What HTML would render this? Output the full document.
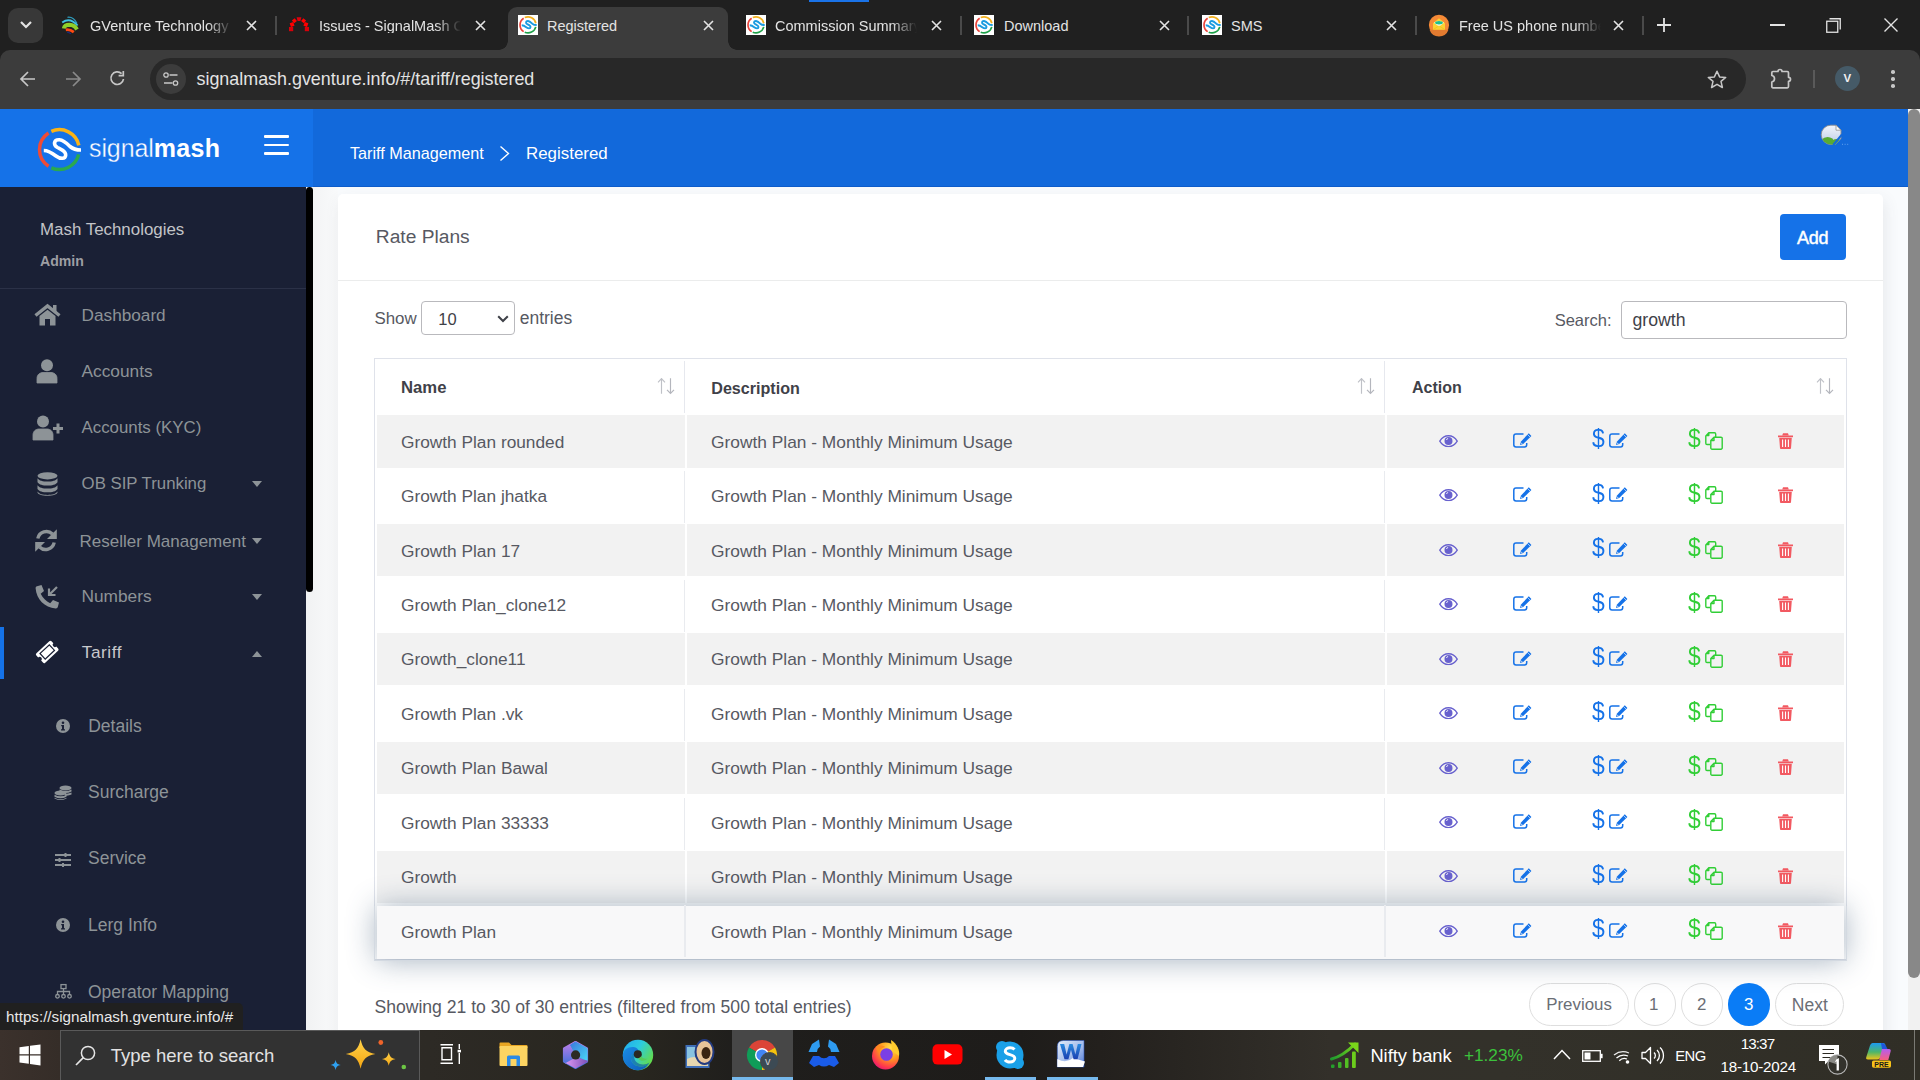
<!DOCTYPE html>
<html><head><meta charset="utf-8">
<style>
*{box-sizing:border-box;margin:0;padding:0}
html,body{width:1920px;height:1080px;overflow:hidden;background:#202020;font-family:"Liberation Sans",sans-serif}
.a{position:absolute}
.t{position:absolute;white-space:nowrap;line-height:1}
svg{position:absolute;overflow:visible}
</style></head><body>
<!-- ===== CHROME TAB STRIP ===== -->
<div class="a" style="left:0;top:0;width:1920px;height:50px;background:#202020"></div>
<div class="a" style="left:809px;top:0;width:60px;height:2px;background:#1a73e8"></div>
<div class="a" style="left:8px;top:8px;width:35px;height:35px;border-radius:10px;background:#383838"></div>
<svg style="left:19px;top:20px" width="14" height="10" viewBox="0 0 14 10"><path d="M2 2 L7 7 L12 2" stroke="#e3e3e3" stroke-width="2.2" fill="none"/></svg>
<!-- active tab -->
<div class="a" style="left:508px;top:7px;width:220px;height:43px;background:#3c3c3c;border-radius:9px 9px 0 0"></div>
<div class="a" style="left:499px;top:41px;width:9px;height:9px;background:radial-gradient(circle at 0 0,#202020 8.5px,#3c3c3c 9px)"></div>
<div class="a" style="left:728px;top:41px;width:9px;height:9px;background:radial-gradient(circle at 100% 0,#202020 8.5px,#3c3c3c 9px)"></div>
<!-- tab separators -->
<div class="a" style="left:275px;top:16px;width:2px;height:19px;background:#4a4a4a"></div>
<div class="a" style="left:960px;top:16px;width:2px;height:19px;background:#4a4a4a"></div>
<div class="a" style="left:1187px;top:16px;width:2px;height:19px;background:#4a4a4a"></div>
<div class="a" style="left:1415px;top:16px;width:2px;height:19px;background:#4a4a4a"></div>
<div class="a" style="left:1642px;top:16px;width:2px;height:19px;background:#4a4a4a"></div>
<!-- tab 1 GVenture -->
<svg style="left:61px;top:15px" width="18" height="19" viewBox="0 0 18 19">
<path d="M6.5 2.3Q12.5 1.5 16 8.5" stroke="#2f9dbd" stroke-width="1.3" fill="none"/>
<path d="M1.2 7.5Q9 1.8 16.6 10.5" stroke="#3fc0e2" stroke-width="1.9" fill="none"/>
<path d="M2.8 13.5Q3.5 9.8 8.5 9.8Q13.5 10 16 14.5" stroke="#8fcf2a" stroke-width="4" fill="none"/>
<path d="M4.8 14.8Q9 14.2 12.8 17.2" stroke="#ff4a12" stroke-width="2.8" fill="none"/>
<path d="M6 17.2Q8 17.5 10 18.8" stroke="#1c2a7a" stroke-width="1.2" fill="none"/>
</svg>
<div class="t" style="left:90px;top:18.8px;font-size:14.5px;color:#e3e3e3;width:143px;overflow:hidden;-webkit-mask-image:linear-gradient(90deg,#000 82%,transparent)">GVenture Technology</div>
<svg style="left:246px;top:20px" width="11" height="11" viewBox="0 0 11 11"><path d="M1 1L10 10M10 1L1 10" stroke="#e3e3e3" stroke-width="1.6"/></svg>
<!-- tab 2 Issues -->
<svg style="left:289px;top:17px" width="20" height="15" viewBox="0 0 20 15">
<rect x="0" y="10" width="4.2" height="4.2" fill="#d8000a"/>
<rect x="1.2" y="5.6" width="3.8" height="3.8" fill="#f00" transform="rotate(-20 3.1 7.5)"/>
<rect x="3.6" y="1.9" width="3.6" height="3.6" fill="#f00" transform="rotate(-40 5.4 3.7)"/>
<path d="M7.6 0.3H12.4L11.4 4H8.6Z" fill="#dd000c"/>
<rect x="12.8" y="1.9" width="3.6" height="3.6" fill="#f00" transform="rotate(40 14.6 3.7)"/>
<rect x="15" y="5.6" width="3.8" height="3.8" fill="#f00" transform="rotate(20 16.9 7.5)"/>
<rect x="15.8" y="10" width="4.2" height="4.2" fill="#d8000a"/>
</svg>
<div class="t" style="left:319px;top:18.8px;font-size:14.5px;color:#e3e3e3;width:142px;overflow:hidden;-webkit-mask-image:linear-gradient(90deg,#000 82%,transparent)">Issues - SignalMash Confluence</div>
<svg style="left:475px;top:20px" width="11" height="11" viewBox="0 0 11 11"><path d="M1 1L10 10M10 1L1 10" stroke="#e3e3e3" stroke-width="1.6"/></svg>
<!-- tab 3 Registered (active) -->
<svg style="left:518px;top:15px" width="20" height="20"><use href="#smfav"/></svg>
<div class="t" style="left:547px;top:18.8px;font-size:14.5px;color:#e3e3e3">Registered</div>
<svg style="left:703px;top:20px" width="11" height="11" viewBox="0 0 11 11"><path d="M1 1L10 10M10 1L1 10" stroke="#e3e3e3" stroke-width="1.6"/></svg>
<svg width="0" height="0" style="position:absolute">
<defs>
<symbol id="smfav" viewBox="0 0 20 20">
<rect width="20" height="20" fill="#fff"/>
<path d="M5.64 3.19 A8.0 8.0 0 0 0 5.64 16.61" stroke="#e8453c" stroke-width="1.7" fill="none"/>
<path d="M6.75 2.59 A8.0 8.0 0 0 1 17.83 8.24" stroke="#f2b01e" stroke-width="1.7" fill="none"/>
<path d="M17.76 11.84 A8.0 8.0 0 0 1 6.75 17.21" stroke="#1fa24a" stroke-width="1.7" fill="none"/>
<path d="M 3.73 10.26 C 5.42 10.26 7.03 11.27 8.63 12.47 C 10.24 13.68 12.45 13.88 12.53 12.07 C 12.65 10.46 10.44 9.66 9.24 9.06 C 7.43 8.05 7.63 5.84 10.04 5.96 C 11.45 6.04 12.85 7.25 14.26 8.65 C 15.47 9.66 16.67 10.06 18.68 10.06" stroke="#1a9be0" stroke-width="1.9" fill="none"/>
</symbol>
<symbol id="tabx" viewBox="0 0 11 11"><path d="M1 1L10 10M10 1L1 10" stroke="#e3e3e3" stroke-width="1.6"/></symbol>
</defs></svg>
<!-- tab 4 -->
<svg style="left:746px;top:15px" width="20" height="20"><use href="#smfav"/></svg>
<div class="t" style="left:775px;top:18.8px;font-size:14.5px;color:#e3e3e3;width:142px;overflow:hidden;-webkit-mask-image:linear-gradient(90deg,#000 82%,transparent)">Commission Summary</div>
<svg style="left:931px;top:20px" width="11" height="11"><use href="#tabx"/></svg>
<!-- tab 5 -->
<svg style="left:974px;top:15px" width="20" height="20"><use href="#smfav"/></svg>
<div class="t" style="left:1004px;top:18.8px;font-size:14.5px;color:#e3e3e3">Download</div>
<svg style="left:1159px;top:20px" width="11" height="11"><use href="#tabx"/></svg>
<!-- tab 6 -->
<svg style="left:1202px;top:15px" width="20" height="20"><use href="#smfav"/></svg>
<div class="t" style="left:1231px;top:18.8px;font-size:14.5px;color:#e3e3e3">SMS</div>
<svg style="left:1386px;top:20px" width="11" height="11"><use href="#tabx"/></svg>
<!-- tab 7 -->
<svg style="left:1428px;top:14px" width="22" height="22" viewBox="0 0 22 22">
<circle cx="11" cy="10.9" r="10.1" fill="#f68a36"/>
<path d="M1.5 15.8H20.5A10.1 10.1 0 0 1 1.5 15.8Z" fill="#e27b30"/>
<path d="M5 9.3L11 4.2L17 9.3V15.7H5Z" fill="#fbd232"/>
<path d="M6 8.8Q11 5 16 8.8L11 12.5Z" fill="#fff"/>
<ellipse cx="11" cy="8.8" rx="3.9" ry="1.7" fill="#20bf8c"/>
<path d="M5 15.7L11 11.8L17 15.7" stroke="#efc21a" stroke-width="0.8" fill="none"/>
</svg>
<div class="t" style="left:1459px;top:18.8px;font-size:14.5px;color:#e3e3e3;width:142px;overflow:hidden;-webkit-mask-image:linear-gradient(90deg,#000 82%,transparent)">Free US phone number</div>
<svg style="left:1613px;top:20px" width="11" height="11"><use href="#tabx"/></svg>
<!-- new tab + -->
<svg style="left:1657px;top:18px" width="14" height="14" viewBox="0 0 14 14"><path d="M7 0V14M0 7H14" stroke="#e3e3e3" stroke-width="1.8"/></svg>
<!-- window controls -->
<div class="a" style="left:1770px;top:24px;width:15px;height:1.5px;background:#e3e3e3"></div>
<svg style="left:1826px;top:18px" width="15" height="15" viewBox="0 0 15 15"><rect x="0.75" y="3.25" width="11" height="11" fill="none" stroke="#e3e3e3" stroke-width="1.3"/><path d="M3.5 0.75H14.25V11.5" fill="none" stroke="#e3e3e3" stroke-width="1.3"/></svg>
<svg style="left:1884px;top:18px" width="14" height="14" viewBox="0 0 14 14"><path d="M0.5 0.5L13.5 13.5M13.5 0.5L0.5 13.5" stroke="#e3e3e3" stroke-width="1.4"/></svg>
<!-- ===== TOOLBAR ===== -->
<div class="a" style="left:0;top:50px;width:1920px;height:59px;background:#3c3c3c;border-radius:10px 10px 0 0"></div>
<div class="a" style="left:508px;top:45px;width:220px;height:10px;background:#3c3c3c"></div>
<svg style="left:20px;top:71px" width="16" height="16" viewBox="0 0 16 16"><path d="M15 8H1.5M8 1L1 8L8 15" stroke="#c7c7c7" stroke-width="1.7" fill="none"/></svg>
<svg style="left:65px;top:71px" width="16" height="16" viewBox="0 0 16 16"><path d="M1 8H14.5M8 1L15 8L8 15" stroke="#8a8a8a" stroke-width="1.7" fill="none"/></svg>
<svg style="left:109px;top:70px" width="17" height="17" viewBox="0 0 17 17"><path d="M14.5 9A6.3 6.3 0 1 1 12.6 3.6" stroke="#c7c7c7" stroke-width="1.7" fill="none"/><path d="M14.3 1V5.7H9.6" stroke="#c7c7c7" stroke-width="1.7" fill="none"/></svg>
<div class="a" style="left:150px;top:58px;width:1596px;height:42px;border-radius:21px;background:#282828"></div>
<div class="a" style="left:156px;top:64px;width:30px;height:30px;border-radius:15px;background:#3c3c3c"></div>
<svg style="left:163px;top:72px" width="16" height="15" viewBox="0 0 16 15"><circle cx="3" cy="3" r="2.2" stroke="#c7c7c7" stroke-width="1.3" fill="none"/><path d="M6.5 3H14.5M1 11H9.5" stroke="#c7c7c7" stroke-width="1.4"/><circle cx="12.5" cy="11" r="2.2" stroke="#c7c7c7" stroke-width="1.3" fill="none"/></svg>
<div class="t" style="left:196.5px;top:70.8px;font-size:17.9px;color:#e3e3e3">signalmash.gventure.info/#/tariff/registered</div>
<svg style="left:1707px;top:70px" width="20" height="19" viewBox="0 0 20 19"><path d="M10 1.2L12.6 6.9L18.7 7.4L14 11.4L15.4 17.5L10 14.3L4.6 17.5L6 11.4L1.3 7.4L7.4 6.9Z" stroke="#c7c7c7" stroke-width="1.5" fill="none" stroke-linejoin="round"/></svg>
<svg style="left:1771px;top:68px" width="21" height="21" viewBox="0 0 21 21"><path d="M2 3.5H7A2 2 0 0 1 11 3.5H16.3Q17.5 3.5 17.5 4.7V9.3A2 2 0 0 1 17.5 13.3V18.6Q17.5 19.8 16.3 19.8H2Q0.8 19.8 0.8 18.6V14Q3.5 13.5 3.5 10.8Q3.5 8 0.8 7.5V4.7Q0.8 3.5 2 3.5Z" stroke="#c7c7c7" stroke-width="1.7" fill="none" stroke-linejoin="round"/></svg>
<div class="a" style="left:1813px;top:70px;width:1.5px;height:18px;background:#5a5a5a"></div>
<div class="a" style="left:1835px;top:66px;width:25px;height:25px;border-radius:50%;background:#455a67"></div>
<div class="t" style="left:1843.6px;top:73.2px;font-size:11.5px;font-weight:700;color:#f0f0f0">V</div>
<div class="a" style="left:1891px;top:70px;width:3.5px;height:3.5px;border-radius:50%;background:#c7c7c7;box-shadow:0 7px 0 #c7c7c7,0 14px 0 #c7c7c7"></div>
<!-- ===== PAGE ===== -->
<div class="a" style="left:0;top:109px;width:1908px;height:921px;background:#f9fbfd"></div>
<!-- header -->
<div class="a" style="left:0;top:109px;width:313px;height:78px;background:#1572e8"></div>
<div class="a" style="left:313px;top:109px;width:1595px;height:78px;background:#1269db"></div>
<div class="a" style="left:313px;top:186px;width:1595px;height:1px;background:#0d5cca"></div>
<svg style="left:0;top:0" width="100" height="200" viewBox="0 0 100 200">
<path d="M48.56 132.91 A19.9 19.9 0 0 0 48.56 166.29" stroke="#ef4b36" stroke-width="3.5" fill="none"/>
<path d="M51.31 131.42 A19.9 19.9 0 0 1 78.84 145.33" stroke="#fbb316" stroke-width="3.5" fill="none"/>
<path d="M78.71 154.41 A19.9 19.9 0 0 1 51.31 167.78" stroke="#2aa94e" stroke-width="3.5" fill="none"/>
<path d="M43.8 150.5 C48 150.5 52 153 56 156 C60 159 65.5 159.5 65.7 155 C66 151 60.5 149 57.5 147.5 C53 145 53.5 139.5 59.5 139.8 C63 140 66.5 143 70 146.5 C73 149 76 150 81 150" stroke="#fff" stroke-width="3.6" fill="none"/>
</svg>
<div class="t" style="left:89px;top:135.8px;font-size:25px;color:#fff;letter-spacing:-0.1px"><span style="-webkit-text-stroke:0.35px #1572e8">signal</span><b style="font-weight:700;letter-spacing:0.3px">mash</b></div>
<div class="a" style="left:264px;top:135px;width:25px;height:3px;background:#fff;border-radius:1px"></div>
<div class="a" style="left:264px;top:143.5px;width:25px;height:2.5px;background:#fff;border-radius:1px"></div>
<div class="a" style="left:264px;top:152px;width:25px;height:3px;background:#fff;border-radius:1px"></div>
<div class="t" style="left:350px;top:145px;font-size:16.2px;color:#fff">Tariff Management</div>
<svg style="left:499px;top:145px" width="12" height="17" viewBox="0 0 12 17"><path d="M1.5 1.5L9.5 8.5L1.5 15.5" stroke="#fff" stroke-width="1.4" fill="none"/></svg>
<div class="t" style="left:526px;top:145.6px;font-size:16.9px;color:#fff">Registered</div>
<svg style="left:1820px;top:124px" width="30" height="22" viewBox="0 0 30 22">
<defs><linearGradient id="bi" x1="0" y1="0" x2="0" y2="1"><stop offset="0" stop-color="#f2f5fb"/><stop offset="1" stop-color="#bccbe6"/></linearGradient>
<clipPath id="bic"><path d="M10.8 1.2H16L21 6.2V14.6L15.2 20.4H10.8A9.6 9.6 0 0 1 10.8 1.2Z"/></clipPath></defs>
<path d="M10.8 1.2H16L21 6.2V14.6L15.2 20.4H10.8A9.6 9.6 0 0 1 10.8 1.2Z" fill="url(#bi)" stroke="#8f8f8f" stroke-width="0.9"/>
<g clip-path="url(#bic)"><path d="M0 17Q6 10.5 12.5 14.5L16 21H0Z" fill="#58ab32"/><path d="M13 16Q16 14 21 16V21H13Z" fill="#58ab32"/></g>
<path d="M16 1.2V6.2H21Z" fill="#fff" stroke="#8f8f8f" stroke-width="0.8"/>
<path d="M22 10.5L13.2 21" stroke="#1269db" stroke-width="2"/>
<path d="M22 20.3H29" stroke="#6aa6f0" stroke-width="0.9" stroke-dasharray="1 1.6"/>
</svg>
<!-- sidebar -->
<div class="a" style="left:0;top:187px;width:306px;height:843px;background:#1a2035"></div>
<div class="a" style="left:306px;top:187px;width:32px;height:843px;background:linear-gradient(90deg,#f1f2f3,#f9fafb)"></div>
<div class="a" style="left:306px;top:187px;width:7px;height:405px;background:#000;border-radius:3.5px"></div>
<div class="t" style="left:40px;top:221.5px;font-size:16.9px;color:#c3c4c8">Mash Technologies</div>
<div class="t" style="left:40px;top:254.1px;font-size:14.1px;font-weight:700;color:#9d9ea3">Admin</div>
<div class="a" style="left:0;top:288px;width:306px;height:1px;background:#2b3147"></div>
<!-- nav items -->
<svg style="left:34px;top:304px" width="27" height="22" viewBox="0 0 27 22">
<path d="M1.5 11.5L13.5 2L25.5 11.5" stroke="#8d9397" stroke-width="3.4" fill="none" stroke-linejoin="miter"/>
<rect x="19" y="1" width="3.5" height="7" fill="#8d9397"/>
<path d="M5.5 12L13.5 5.8L21.5 12V21.5H16V15H11V21.5H5.5Z" fill="#8d9397"/>
</svg>
<div class="t" style="left:81.6px;top:307.4px;font-size:17.2px;color:#8d9397">Dashboard</div>
<svg style="left:36px;top:359px" width="22" height="25" viewBox="0 0 22 25">
<circle cx="11" cy="6.3" r="6" fill="#8d9397"/>
<path d="M1 24V19.5C1 15.5 4 13.5 7 13.5H15C18 13.5 21 15.5 21 19.5V24Z" fill="#8d9397" stroke="#8d9397" stroke-width="0.8" stroke-linejoin="round"/>
</svg>
<div class="t" style="left:81.5px;top:363.3px;font-size:17.3px;color:#8d9397">Accounts</div>
<svg style="left:32px;top:415px" width="31" height="26" viewBox="0 0 31 26">
<circle cx="11" cy="6.5" r="6" fill="#8d9397"/>
<path d="M1 25V20C1 16 4 14 7 14H15C18 14 21 16 21 20V25Z" fill="#8d9397" stroke="#8d9397" stroke-width="0.8" stroke-linejoin="round"/>
<path d="M26 8.5V18.5M21 13.5H31" stroke="#8d9397" stroke-width="3"/>
</svg>
<div class="t" style="left:81.5px;top:419.8px;font-size:16.85px;color:#8d9397">Accounts (KYC)</div>
<svg style="left:37px;top:472px" width="21" height="24" viewBox="0 0 21 24">
<ellipse cx="10.5" cy="3.8" rx="10" ry="3.6" fill="#8d9397"/>
<path d="M0.5 6.3C2 8.8 6 9.6 10.5 9.6S19 8.8 20.5 6.3V10.2C19 12.7 15 13.5 10.5 13.5S2 12.7 0.5 10.2Z" fill="#8d9397"/>
<path d="M0.5 13.2C2 15.7 6 16.5 10.5 16.5S19 15.7 20.5 13.2V17C19 19.5 15 20.3 10.5 20.3S2 19.5 0.5 17Z" fill="#8d9397"/>
<path d="M0.5 19.6C2 22.1 6 23 10.5 23S19 22.1 20.5 19.6V20.2C20.5 22.3 16 23.8 10.5 23.8S0.5 22.3 0.5 20.2Z" fill="#8d9397"/>
</svg>
<div class="t" style="left:81.6px;top:475.8px;font-size:16.8px;color:#8d9397">OB SIP Trunking</div>
<svg style="left:252px;top:481px" width="10" height="6" viewBox="0 0 10 6"><path d="M0 0H10L5 6Z" fill="#8d9397"/></svg>
<svg style="left:34px;top:528px" width="24" height="25" viewBox="0 0 24 25">
<path d="M3.8 10.5A8.8 8.8 0 0 1 18.5 6" stroke="#8d9397" stroke-width="3.4" fill="none"/>
<path d="M22.8 1.2V11H13Z" fill="#8d9397"/>
<path d="M20.2 14.5A8.8 8.8 0 0 1 5.5 19" stroke="#8d9397" stroke-width="3.4" fill="none"/>
<path d="M1.2 23.8V14H11Z" fill="#8d9397"/>
</svg>
<div class="t" style="left:79.6px;top:532.6px;font-size:17px;color:#8d9397">Reseller Management</div>
<svg style="left:252px;top:538px" width="10" height="6" viewBox="0 0 10 6"><path d="M0 0H10L5 6Z" fill="#8d9397"/></svg>
<svg style="left:35px;top:584px" width="26" height="25" viewBox="0 0 26 25">
<path d="M6.5 1L2 2.2C1 2.5 0.5 3.3 0.6 4.3C1.5 15.5 9.5 23.5 20.7 24.4C21.7 24.5 22.5 24 22.8 23L24 18.5L18 16L15.2 19.3C11 17.2 7.8 14 5.7 9.8L9 7Z" fill="#8d9397"/>
<path d="M14 11L22 3M14 4.5V11H20.5" stroke="#8d9397" stroke-width="2.2" fill="none"/>
</svg>
<div class="t" style="left:81.5px;top:588.4px;font-size:17.3px;color:#8d9397">Numbers</div>
<svg style="left:252px;top:594px" width="10" height="6" viewBox="0 0 10 6"><path d="M0 0H10L5 6Z" fill="#8d9397"/></svg>
<!-- active tariff -->
<div class="a" style="left:0;top:627px;width:4px;height:52px;background:#1572e8"></div>
<svg style="left:35px;top:640px" width="25" height="24" viewBox="0 0 25 24">
<g transform="rotate(-43 12.25 11.95) translate(12.25 11.95) scale(1.09) translate(-12.25 -11.95)">
<path d="M4.2 6.05H20.3Q21.75 6.05 21.75 7.5V9.95A2 2 0 0 0 21.75 13.95V16.4Q21.75 17.85 20.3 17.85H4.2Q2.75 17.85 2.75 16.4V13.95A2 2 0 0 0 2.75 9.95V7.5Q2.75 6.05 4.2 6.05Z" fill="#fff"/>
<rect x="6.4" y="8.45" width="11.7" height="7" fill="none" stroke="#1a2035" stroke-width="1.1"/>
</g>
</svg>
<div class="t" style="left:81.7px;top:644.4px;font-size:17.2px;color:#c8c9cd;letter-spacing:0.6px">Tariff</div>
<svg style="left:252px;top:651px" width="10" height="6" viewBox="0 0 10 6"><path d="M0 6H10L5 0Z" fill="#8d9397"/></svg>
<!-- sub items -->
<svg style="left:56px;top:719px" width="14" height="14" viewBox="0 0 14 14">
<circle cx="7" cy="7" r="7" fill="#8d9397"/>
<circle cx="7" cy="3.8" r="1.3" fill="#1a2035"/>
<path d="M5.2 6H8V10.2H9V11.5H5V10.2H6V7.3H5.2Z" fill="#1a2035"/>
</svg>
<div class="t" style="left:88.2px;top:718.2px;font-size:17.5px;color:#8d9397">Details</div>
<svg style="left:54px;top:785px" width="18" height="16" viewBox="0 0 18 16">
<ellipse cx="11.5" cy="3" rx="6" ry="2.6" fill="#8d9397"/>
<path d="M5.5 4.5Q11.5 7.5 17.5 4.5V6.5Q11.5 9.5 5.5 6.5Z" fill="#8d9397"/>
<path d="M11 8.5Q14.5 9 17.5 7.5V9.5Q14.5 11 11 10.5Z" fill="#8d9397"/>
<ellipse cx="6.5" cy="8" rx="6" ry="2.6" fill="#8d9397"/>
<path d="M0.5 9.8Q6.5 12.8 12.5 9.8V11.8Q6.5 14.8 0.5 11.8Z" fill="#8d9397"/>
<path d="M0.5 12.8Q6.5 15.8 12.5 12.8V13.5Q6.5 16.5 0.5 13.5Z" fill="#8d9397"/>
</svg>
<div class="t" style="left:88px;top:784.1px;font-size:17.5px;color:#8d9397">Surcharge</div>
<svg style="left:55px;top:853px" width="16" height="14" viewBox="0 0 16 14">
<path d="M0 2H16M0 7H16M0 12H16" stroke="#8d9397" stroke-width="1.8"/>
<rect x="9.5" y="0" width="2" height="4" fill="#8d9397"/>
<rect x="3.5" y="5" width="2" height="4" fill="#8d9397"/>
<rect x="7" y="10" width="2" height="4" fill="#8d9397"/>
</svg>
<div class="t" style="left:88px;top:850.2px;font-size:17.5px;color:#8d9397">Service</div>
<svg style="left:56px;top:918px" width="14" height="14" viewBox="0 0 14 14">
<circle cx="7" cy="7" r="7" fill="#8d9397"/>
<circle cx="7" cy="3.8" r="1.3" fill="#1a2035"/>
<path d="M5.2 6H8V10.2H9V11.5H5V10.2H6V7.3H5.2Z" fill="#1a2035"/>
</svg>
<div class="t" style="left:88px;top:917px;font-size:17.5px;color:#8d9397">Lerg Info</div>
<svg style="left:55px;top:984px" width="17" height="15" viewBox="0 0 17 15">
<rect x="6" y="0.6" width="5" height="4" fill="none" stroke="#8d9397" stroke-width="1.3"/>
<path d="M8.5 4.6V7.5M2.5 10V7.5H14.5V10M8.5 7.5V10" stroke="#8d9397" stroke-width="1.3" fill="none"/>
<circle cx="2.5" cy="12.3" r="1.8" fill="none" stroke="#8d9397" stroke-width="1.3"/>
<circle cx="8.5" cy="12.3" r="1.8" fill="none" stroke="#8d9397" stroke-width="1.3"/>
<circle cx="14.5" cy="12.3" r="1.8" fill="none" stroke="#8d9397" stroke-width="1.3"/>
</svg>
<div class="t" style="left:88px;top:983.6px;font-size:17.5px;color:#8d9397">Operator Mapping</div>
<!-- ===== CARD ===== -->
<div class="a" style="left:338px;top:194px;width:1545px;height:900px;background:#fff;border-radius:5px;box-shadow:2px 6px 15px 0 rgba(69,65,78,0.1)"></div>
<div class="t" style="left:375.8px;top:226.8px;font-size:19.2px;color:#575962">Rate Plans</div>
<div class="a" style="left:1780px;top:214px;width:66px;height:46px;background:#1572e8;border-radius:4px"></div>
<div class="t" style="left:1797px;top:228.6px;font-size:18px;color:#fff;-webkit-text-stroke:0.45px #fff;letter-spacing:-0.2px">Add</div>
<div class="a" style="left:338px;top:280px;width:1545px;height:1px;background:#ebecec"></div>
<div class="t" style="left:374.4px;top:310.7px;font-size:16.9px;color:#575962">Show</div>
<div class="a" style="left:421px;top:301px;width:94px;height:34px;border:1px solid #b9b9bd;border-radius:4px;background:#fff"></div>
<div class="t" style="left:438.3px;top:310.9px;font-size:16.5px;color:#3f4148">10</div>
<svg style="left:497px;top:315px" width="12" height="8" viewBox="0 0 12 8"><path d="M1.2 1.2L6 6L10.8 1.2" stroke="#3f4148" stroke-width="2" fill="none"/></svg>
<div class="t" style="left:519.7px;top:310.1px;font-size:17.5px;color:#575962">entries</div>
<div class="t" style="left:1554.7px;top:311.8px;font-size:16.5px;color:#575962">Search:</div>
<div class="a" style="left:1621px;top:301px;width:226px;height:38px;border:1px solid #b9b9bd;border-radius:4px;background:#fff"></div>
<div class="t" style="left:1632.5px;top:311.8px;font-size:17.7px;color:#3f4148">growth</div>
<!-- table -->
<div class="a" style="left:374px;top:358px;width:1473px;height:602px;border:1px solid #dfe2ea"></div>
<div class="a" style="left:684px;top:361px;width:1px;height:52px;background:#e6e8ee"></div>
<div class="a" style="left:1384px;top:361px;width:1px;height:52px;background:#e6e8ee"></div>
<div class="t" style="left:401px;top:380.2px;font-size:16.7px;font-weight:700;color:#3f4148">Name</div>
<div class="t" style="left:711.3px;top:380.2px;font-size:16.1px;font-weight:700;color:#3f4148">Description</div>
<div class="t" style="left:1412px;top:380.2px;font-size:16px;font-weight:700;color:#3f4148">Action</div>
<svg width="0" height="0" style="position:absolute"><defs>
<symbol id="sort" viewBox="0 0 18 17"><path d="M4.5 15.8V0.8M1 4.3L4.5 0.6L8 4.3" stroke="#bfc1c7" stroke-width="1.15" fill="none"/><path d="M13.5 0.3V15.3M10 11.8L13.5 15.5L17 11.8" stroke="#b4b6bd" stroke-width="1.15" fill="none"/></symbol>
</defs></svg>
<svg style="left:657px;top:377.5px" width="18" height="17"><use href="#sort"/></svg>
<svg style="left:1357px;top:377.5px" width="18" height="17"><use href="#sort"/></svg>
<svg style="left:1816px;top:377.5px" width="18" height="17"><use href="#sort"/></svg>
<!--ROWS-->
<svg width="0" height="0" style="position:absolute"><defs>
<symbol id="eye" viewBox="0 0 20 13"><path d="M0.8 6.5C3 2.8 6.3 0.8 10 0.8S17 2.8 19.2 6.5C17 10.2 13.7 12.2 10 12.2S3 10.2 0.8 6.5Z" stroke="#6861ce" stroke-width="1.4" fill="none"/><circle cx="10" cy="6.3" r="4.2" fill="#6861ce"/><path d="M7.8 5.2A2.4 2.4 0 0 1 9.6 3.6" stroke="#fff" stroke-width="0.9" fill="none"/></symbol>
<symbol id="edit" viewBox="0 0 19 15"><path d="M10.5 1H3A2.2 2.2 0 0 0 0.8 3.2V11.8A2.2 2.2 0 0 0 3 14H11.5A2.2 2.2 0 0 0 13.7 11.8V10" stroke="#1572e8" stroke-width="1.5" fill="none"/><path d="M15.8 0.3L18.4 2.9L10.2 11.1L7 11.9L7.8 8.7Z" fill="#1572e8"/><path d="M14.6 1.6L17.1 4.1" stroke="#fff" stroke-width="0.6"/><path d="M7.9 9.6L9.2 10.9" stroke="#f2f2f2" stroke-width="1"/></symbol>
<symbol id="copy" viewBox="0 0 18 18"><path d="M3.8 0.8H9.5A1.2 1.2 0 0 1 10.7 2V5.5M5.2 12.5H2A1.2 1.2 0 0 1 0.8 11.3V4L3.8 0.8V3.5H1" stroke="#31ce36" stroke-width="1.4" fill="none" stroke-linejoin="round"/><path d="M9 5.2H16A1.2 1.2 0 0 1 17.2 6.4V16A1.2 1.2 0 0 1 16 17.2H7A1.2 1.2 0 0 1 5.8 16V8.5L9 5.2V8.5H6" stroke="#31ce36" stroke-width="1.4" fill="none" stroke-linejoin="round"/></symbol>
<symbol id="trash" viewBox="0 0 15 16"><path d="M0 2.5H15V4.2H0Z" fill="#f25961"/><path d="M5 0.3H10L10.8 2.5H4.2Z" fill="#f25961"/><path d="M1.2 4.8H13.8L13 15.2A0.9 0.9 0 0 1 12.1 16H2.9A0.9 0.9 0 0 1 2 15.2Z" fill="#f25961"/><path d="M4.6 6.5V14M7.5 6.5V14M10.4 6.5V14" stroke="#fff" stroke-width="1.1"/></symbol>
</defs></svg>
<div class="a" style="left:377px;top:415.00px;width:308px;height:52.5px;background:#f2f2f2"></div>
<div class="a" style="left:687px;top:415.00px;width:698px;height:52.5px;background:#f2f2f2"></div>
<div class="a" style="left:1387px;top:415.00px;width:457px;height:52.5px;background:#f2f2f2"></div>
<div class="t" style="left:401px;top:433.66px;font-size:17.3px;color:#575962">Growth Plan rounded</div>
<div class="t" style="left:711px;top:433.66px;font-size:17.35px;color:#575962">Growth Plan - Monthly Minimum Usage</div>
<svg style="left:1439px;top:434.95px" width="19" height="12.4" viewBox="0 0 20 13"><use href="#eye"/></svg>
<svg style="left:1513px;top:432.75px" width="19" height="15"><use href="#edit"/></svg>
<div class="t" style="left:1591.7px;top:425.40px;font-size:26px;color:#1572e8;transform:scaleX(0.88);transform-origin:0 0">$</div>
<svg style="left:1609px;top:432.75px" width="19" height="15"><use href="#edit"/></svg>
<div class="t" style="left:1687.7px;top:425.40px;font-size:26px;color:#31ce36;transform:scaleX(0.88);transform-origin:0 0">$</div>
<svg style="left:1705px;top:431.75px" width="18" height="18"><use href="#copy"/></svg>
<svg style="left:1778px;top:432.75px" width="15" height="16"><use href="#trash"/></svg>
<div class="a" style="left:684px;top:471.44px;width:1px;height:52px;background:#e9ebef"></div>
<div class="a" style="left:1384px;top:471.44px;width:1px;height:52px;background:#e9ebef"></div>
<div class="t" style="left:401px;top:488.10px;font-size:17.3px;color:#575962">Growth Plan jhatka</div>
<div class="t" style="left:711px;top:488.10px;font-size:17.35px;color:#575962">Growth Plan - Monthly Minimum Usage</div>
<svg style="left:1439px;top:489.39px" width="19" height="12.4" viewBox="0 0 20 13"><use href="#eye"/></svg>
<svg style="left:1513px;top:487.19px" width="19" height="15"><use href="#edit"/></svg>
<div class="t" style="left:1591.7px;top:479.84px;font-size:26px;color:#1572e8;transform:scaleX(0.88);transform-origin:0 0">$</div>
<svg style="left:1609px;top:487.19px" width="19" height="15"><use href="#edit"/></svg>
<div class="t" style="left:1687.7px;top:479.84px;font-size:26px;color:#31ce36;transform:scaleX(0.88);transform-origin:0 0">$</div>
<svg style="left:1705px;top:486.19px" width="18" height="18"><use href="#copy"/></svg>
<svg style="left:1778px;top:487.19px" width="15" height="16"><use href="#trash"/></svg>
<div class="a" style="left:377px;top:523.88px;width:308px;height:52.5px;background:#f2f2f2"></div>
<div class="a" style="left:687px;top:523.88px;width:698px;height:52.5px;background:#f2f2f2"></div>
<div class="a" style="left:1387px;top:523.88px;width:457px;height:52.5px;background:#f2f2f2"></div>
<div class="t" style="left:401px;top:542.54px;font-size:17.3px;color:#575962">Growth Plan 17</div>
<div class="t" style="left:711px;top:542.54px;font-size:17.35px;color:#575962">Growth Plan - Monthly Minimum Usage</div>
<svg style="left:1439px;top:543.83px" width="19" height="12.4" viewBox="0 0 20 13"><use href="#eye"/></svg>
<svg style="left:1513px;top:541.63px" width="19" height="15"><use href="#edit"/></svg>
<div class="t" style="left:1591.7px;top:534.28px;font-size:26px;color:#1572e8;transform:scaleX(0.88);transform-origin:0 0">$</div>
<svg style="left:1609px;top:541.63px" width="19" height="15"><use href="#edit"/></svg>
<div class="t" style="left:1687.7px;top:534.28px;font-size:26px;color:#31ce36;transform:scaleX(0.88);transform-origin:0 0">$</div>
<svg style="left:1705px;top:540.63px" width="18" height="18"><use href="#copy"/></svg>
<svg style="left:1778px;top:541.63px" width="15" height="16"><use href="#trash"/></svg>
<div class="a" style="left:684px;top:580.32px;width:1px;height:52px;background:#e9ebef"></div>
<div class="a" style="left:1384px;top:580.32px;width:1px;height:52px;background:#e9ebef"></div>
<div class="t" style="left:401px;top:596.98px;font-size:17.3px;color:#575962">Growth Plan_clone12</div>
<div class="t" style="left:711px;top:596.98px;font-size:17.35px;color:#575962">Growth Plan - Monthly Minimum Usage</div>
<svg style="left:1439px;top:598.27px" width="19" height="12.4" viewBox="0 0 20 13"><use href="#eye"/></svg>
<svg style="left:1513px;top:596.07px" width="19" height="15"><use href="#edit"/></svg>
<div class="t" style="left:1591.7px;top:588.72px;font-size:26px;color:#1572e8;transform:scaleX(0.88);transform-origin:0 0">$</div>
<svg style="left:1609px;top:596.07px" width="19" height="15"><use href="#edit"/></svg>
<div class="t" style="left:1687.7px;top:588.72px;font-size:26px;color:#31ce36;transform:scaleX(0.88);transform-origin:0 0">$</div>
<svg style="left:1705px;top:595.07px" width="18" height="18"><use href="#copy"/></svg>
<svg style="left:1778px;top:596.07px" width="15" height="16"><use href="#trash"/></svg>
<div class="a" style="left:377px;top:632.76px;width:308px;height:52.5px;background:#f2f2f2"></div>
<div class="a" style="left:687px;top:632.76px;width:698px;height:52.5px;background:#f2f2f2"></div>
<div class="a" style="left:1387px;top:632.76px;width:457px;height:52.5px;background:#f2f2f2"></div>
<div class="t" style="left:401px;top:651.42px;font-size:17.3px;color:#575962">Growth_clone11</div>
<div class="t" style="left:711px;top:651.42px;font-size:17.35px;color:#575962">Growth Plan - Monthly Minimum Usage</div>
<svg style="left:1439px;top:652.71px" width="19" height="12.4" viewBox="0 0 20 13"><use href="#eye"/></svg>
<svg style="left:1513px;top:650.51px" width="19" height="15"><use href="#edit"/></svg>
<div class="t" style="left:1591.7px;top:643.16px;font-size:26px;color:#1572e8;transform:scaleX(0.88);transform-origin:0 0">$</div>
<svg style="left:1609px;top:650.51px" width="19" height="15"><use href="#edit"/></svg>
<div class="t" style="left:1687.7px;top:643.16px;font-size:26px;color:#31ce36;transform:scaleX(0.88);transform-origin:0 0">$</div>
<svg style="left:1705px;top:649.51px" width="18" height="18"><use href="#copy"/></svg>
<svg style="left:1778px;top:650.51px" width="15" height="16"><use href="#trash"/></svg>
<div class="a" style="left:684px;top:689.20px;width:1px;height:52px;background:#e9ebef"></div>
<div class="a" style="left:1384px;top:689.20px;width:1px;height:52px;background:#e9ebef"></div>
<div class="t" style="left:401px;top:705.86px;font-size:17.3px;color:#575962">Growth Plan .vk</div>
<div class="t" style="left:711px;top:705.86px;font-size:17.35px;color:#575962">Growth Plan - Monthly Minimum Usage</div>
<svg style="left:1439px;top:707.15px" width="19" height="12.4" viewBox="0 0 20 13"><use href="#eye"/></svg>
<svg style="left:1513px;top:704.95px" width="19" height="15"><use href="#edit"/></svg>
<div class="t" style="left:1591.7px;top:697.60px;font-size:26px;color:#1572e8;transform:scaleX(0.88);transform-origin:0 0">$</div>
<svg style="left:1609px;top:704.95px" width="19" height="15"><use href="#edit"/></svg>
<div class="t" style="left:1687.7px;top:697.60px;font-size:26px;color:#31ce36;transform:scaleX(0.88);transform-origin:0 0">$</div>
<svg style="left:1705px;top:703.95px" width="18" height="18"><use href="#copy"/></svg>
<svg style="left:1778px;top:704.95px" width="15" height="16"><use href="#trash"/></svg>
<div class="a" style="left:377px;top:741.64px;width:308px;height:52.5px;background:#f2f2f2"></div>
<div class="a" style="left:687px;top:741.64px;width:698px;height:52.5px;background:#f2f2f2"></div>
<div class="a" style="left:1387px;top:741.64px;width:457px;height:52.5px;background:#f2f2f2"></div>
<div class="t" style="left:401px;top:760.30px;font-size:17.3px;color:#575962">Growth Plan Bawal</div>
<div class="t" style="left:711px;top:760.30px;font-size:17.35px;color:#575962">Growth Plan - Monthly Minimum Usage</div>
<svg style="left:1439px;top:761.59px" width="19" height="12.4" viewBox="0 0 20 13"><use href="#eye"/></svg>
<svg style="left:1513px;top:759.39px" width="19" height="15"><use href="#edit"/></svg>
<div class="t" style="left:1591.7px;top:752.04px;font-size:26px;color:#1572e8;transform:scaleX(0.88);transform-origin:0 0">$</div>
<svg style="left:1609px;top:759.39px" width="19" height="15"><use href="#edit"/></svg>
<div class="t" style="left:1687.7px;top:752.04px;font-size:26px;color:#31ce36;transform:scaleX(0.88);transform-origin:0 0">$</div>
<svg style="left:1705px;top:758.39px" width="18" height="18"><use href="#copy"/></svg>
<svg style="left:1778px;top:759.39px" width="15" height="16"><use href="#trash"/></svg>
<div class="a" style="left:684px;top:798.08px;width:1px;height:52px;background:#e9ebef"></div>
<div class="a" style="left:1384px;top:798.08px;width:1px;height:52px;background:#e9ebef"></div>
<div class="t" style="left:401px;top:814.74px;font-size:17.3px;color:#575962">Growth Plan 33333</div>
<div class="t" style="left:711px;top:814.74px;font-size:17.35px;color:#575962">Growth Plan - Monthly Minimum Usage</div>
<svg style="left:1439px;top:816.03px" width="19" height="12.4" viewBox="0 0 20 13"><use href="#eye"/></svg>
<svg style="left:1513px;top:813.83px" width="19" height="15"><use href="#edit"/></svg>
<div class="t" style="left:1591.7px;top:806.48px;font-size:26px;color:#1572e8;transform:scaleX(0.88);transform-origin:0 0">$</div>
<svg style="left:1609px;top:813.83px" width="19" height="15"><use href="#edit"/></svg>
<div class="t" style="left:1687.7px;top:806.48px;font-size:26px;color:#31ce36;transform:scaleX(0.88);transform-origin:0 0">$</div>
<svg style="left:1705px;top:812.83px" width="18" height="18"><use href="#copy"/></svg>
<svg style="left:1778px;top:813.83px" width="15" height="16"><use href="#trash"/></svg>
<div class="a" style="left:377px;top:850.52px;width:308px;height:52.5px;background:#f2f2f2"></div>
<div class="a" style="left:687px;top:850.52px;width:698px;height:52.5px;background:#f2f2f2"></div>
<div class="a" style="left:1387px;top:850.52px;width:457px;height:52.5px;background:#f2f2f2"></div>
<div class="t" style="left:401px;top:869.18px;font-size:17.3px;color:#575962">Growth</div>
<div class="t" style="left:711px;top:869.18px;font-size:17.35px;color:#575962">Growth Plan - Monthly Minimum Usage</div>
<svg style="left:1439px;top:870.47px" width="19" height="12.4" viewBox="0 0 20 13"><use href="#eye"/></svg>
<svg style="left:1513px;top:868.27px" width="19" height="15"><use href="#edit"/></svg>
<div class="t" style="left:1591.7px;top:860.92px;font-size:26px;color:#1572e8;transform:scaleX(0.88);transform-origin:0 0">$</div>
<svg style="left:1609px;top:868.27px" width="19" height="15"><use href="#edit"/></svg>
<div class="t" style="left:1687.7px;top:860.92px;font-size:26px;color:#31ce36;transform:scaleX(0.88);transform-origin:0 0">$</div>
<svg style="left:1705px;top:867.27px" width="18" height="18"><use href="#copy"/></svg>
<svg style="left:1778px;top:868.27px" width="15" height="16"><use href="#trash"/></svg>
<div class="a" style="left:377px;top:905.56px;width:1467px;height:53.4px;background:#f8f8f9;box-shadow:0 1px 30px rgba(60,88,118,0.48);z-index:1"></div>
<div class="a" style="left:374px;top:905.56px;width:1473px;height:55px;border:1px solid #d3d9e1;border-top:none;z-index:1"></div>
<div class="a" style="left:684px;top:904.96px;width:1.5px;height:52.5px;background:#e9ebef;z-index:2"></div>
<div class="a" style="left:1384px;top:904.96px;width:1.5px;height:52.5px;background:#e9ebef;z-index:2"></div>
<div class="t" style="left:401px;top:923.62px;font-size:17.3px;color:#575962;z-index:2">Growth Plan</div>
<div class="t" style="left:711px;top:923.62px;font-size:17.35px;color:#575962;z-index:2">Growth Plan - Monthly Minimum Usage</div>
<svg style="left:1439px;top:924.91px;z-index:2" width="19" height="12.4" viewBox="0 0 20 13"><use href="#eye"/></svg>
<svg style="left:1513px;top:922.71px;z-index:2" width="19" height="15"><use href="#edit"/></svg>
<div class="t" style="left:1591.7px;top:915.36px;font-size:26px;color:#1572e8;transform:scaleX(0.88);transform-origin:0 0;z-index:2">$</div>
<svg style="left:1609px;top:922.71px;z-index:2" width="19" height="15"><use href="#edit"/></svg>
<div class="t" style="left:1687.7px;top:915.36px;font-size:26px;color:#31ce36;transform:scaleX(0.88);transform-origin:0 0;z-index:2">$</div>
<svg style="left:1705px;top:921.71px;z-index:2" width="18" height="18"><use href="#copy"/></svg>
<svg style="left:1778px;top:922.71px;z-index:2" width="15" height="16"><use href="#trash"/></svg>
<!--/ROWS-->
<!-- footer of table -->
<div class="t" style="left:374.4px;top:998.7px;font-size:17.6px;color:#575962">Showing 21 to 30 of 30 entries (filtered from 500 total entries)</div>
<div class="a" style="left:1529px;top:983px;width:99.5px;height:43px;border:1px solid #dedede;border-radius:22px;background:#fff"></div>
<div class="t" style="left:1546.2px;top:997.3px;font-size:16.9px;color:#6b6e75">Previous</div>
<div class="a" style="left:1634px;top:983px;width:41.5px;height:43px;border:1px solid #dedede;border-radius:22px;background:#fff"></div>
<div class="t" style="left:1649px;top:997.3px;font-size:16.9px;color:#6b6e75">1</div>
<div class="a" style="left:1681px;top:983px;width:41.5px;height:43px;border:1px solid #dedede;border-radius:22px;background:#fff"></div>
<div class="t" style="left:1697px;top:997.3px;font-size:16.9px;color:#6b6e75">2</div>
<div class="a" style="left:1728px;top:983px;width:42px;height:43px;border-radius:22px;background:#0a7cf6"></div>
<div class="t" style="left:1744px;top:997.3px;font-size:16.9px;color:#fff">3</div>
<div class="a" style="left:1775px;top:983px;width:69px;height:43px;border:1px solid #dedede;border-radius:22px;background:#fff"></div>
<div class="t" style="left:1791.8px;top:997.3px;font-size:17.5px;color:#6b6e75">Next</div>
<!-- page scrollbar -->
<div class="a" style="left:1908px;top:109px;width:12px;height:921px;background:#f1f1f1"></div>
<div class="a" style="left:1908px;top:109px;width:12px;height:869px;background:#888;border-radius:6px"></div>
<!-- status tooltip -->
<div class="a" style="left:0;top:1003px;width:243px;height:27px;background:#202020;border-radius:0 5px 0 0"></div>
<div class="t" style="left:6px;top:1008.5px;font-size:15.2px;color:#e8e8e8">https://signalmash.gventure.info/#</div>
<!-- ===== TASKBAR ===== -->
<div class="a" style="left:0;top:1030px;width:1920px;height:50px;background:linear-gradient(90deg,#3b312c 0,#352d28 60px,#2d2a25 430px,#28261f 640px,#1f1e1c 740px,#1e1c1a 1020px,#23201d 1100px,#33302a 1330px,#33312a 1500px,#302e26 1920px)"></div>
<!-- start -->
<svg style="left:19px;top:1044px" width="22" height="22" viewBox="0 0 22 22">
<path d="M0.5 3.3L9.8 2V10.3H0.5Z" fill="#fff"/><path d="M11 1.8L21.5 0.4V10.3H11Z" fill="#fff"/>
<path d="M0.5 11.5H9.8V19.8L0.5 18.5Z" fill="#fff"/><path d="M11 11.5H21.5V21.4L11 20Z" fill="#fff"/>
</svg>
<div class="a" style="left:60px;top:1030px;width:360px;height:50px;background:#323232;border:1px solid #5a5a5a;border-bottom:none"></div>
<svg style="left:75px;top:1045px" width="21" height="21" viewBox="0 0 21 21"><circle cx="13" cy="8" r="6.6" stroke="#e6e6e6" stroke-width="1.5" fill="none"/><path d="M8.3 12.7L1 20" stroke="#e6e6e6" stroke-width="1.7"/></svg>
<div class="t" style="left:110.8px;top:1046.7px;font-size:18.5px;color:#e2e2e2">Type here to search</div>
<svg style="left:330px;top:1038px" width="80" height="34" viewBox="0 0 80 34">
<defs><linearGradient id="gs" x1="0" y1="0" x2="0" y2="1"><stop offset="0" stop-color="#ffd34a"/><stop offset="1" stop-color="#f4a512"/></linearGradient></defs>
<path d="M30.60 1.20C32.67 10.67 35.93 13.93 45.40 16.00C35.93 18.07 32.67 21.33 30.60 30.80C28.53 21.33 25.27 18.07 15.80 16.00C25.27 13.93 28.53 10.67 30.60 1.20Z" fill="url(#gs)"/>
<path d="M58.75 14.20C59.70 18.55 61.20 20.05 65.55 21.00C61.20 21.95 59.70 23.45 58.75 27.80C57.80 23.45 56.30 21.95 51.95 21.00C56.30 20.05 57.80 18.55 58.75 14.20Z" fill="url(#gs)"/>
<path d="M5.60 21.80C6.22 25.23 7.37 26.38 10.80 27.00C7.37 27.62 6.22 28.77 5.60 32.20C4.98 28.77 3.83 27.62 0.40 27.00C3.83 26.38 4.98 25.23 5.60 21.80Z" fill="#2fa0f0"/>
<circle cx="50.8" cy="4.5" r="2.4" fill="#f0642a"/>
<circle cx="73.8" cy="29" r="2.3" fill="#6cc644"/>
</svg>
<!-- task view -->
<svg style="left:440px;top:1044px" width="21" height="20" viewBox="0 0 21 20">
<path d="M0.5 0.7H13M0.5 19.3H13M2 3.8H11.5V15.8H2Z" stroke="#fff" stroke-width="1.4" fill="none"/>
<path d="M19.3 0V5M19.3 9V20" stroke="#fff" stroke-width="1.4"/><rect x="17.6" y="5.8" width="3.4" height="2.6" fill="#fff"/>
</svg>
<!-- file explorer -->
<svg style="left:499px;top:1042px" width="30" height="25" viewBox="0 0 30 25">
<path d="M0.5 1.5A1 1 0 0 1 1.5 0.5H10L12.5 3H27.5A1 1 0 0 1 28.5 4V6H0.5Z" fill="#e8a623"/>
<rect x="0.5" y="4" width="28" height="20" rx="1" fill="#fcd462"/>
<path d="M8 24V15A1.5 1.5 0 0 1 9.5 13.5H19.5A1.5 1.5 0 0 1 21 15V24H17.5V17H11.5V24Z" fill="#2b8ae6"/>
</svg>
<!-- copilot 365 -->
<svg style="left:562px;top:1040px" width="28" height="30" viewBox="0 0 28 30">
<defs><linearGradient id="m1" x1="0" y1="0" x2="0" y2="1"><stop offset="0" stop-color="#c07ee8"/><stop offset="1" stop-color="#2f6fd8"/></linearGradient>
<linearGradient id="m2" x1="0" y1="0" x2="1" y2="1"><stop offset="0" stop-color="#3b78dc"/><stop offset="1" stop-color="#48d8f4"/></linearGradient>
<linearGradient id="m3" x1="0" y1="0" x2="1" y2="0"><stop offset="0" stop-color="#e29cf6"/><stop offset="1" stop-color="#7a4fb8"/></linearGradient></defs>
<path d="M13.5 2L25 8.5V21.5L13.5 28L2 21.5V8.5Z" fill="url(#m1)" stroke="url(#m1)" stroke-width="2.2" stroke-linejoin="round"/>
<path d="M8.5 5L13.5 2L25 8.5V21.3L14.2 15Z" fill="url(#m2)" stroke="url(#m2)" stroke-width="1" stroke-linejoin="round"/>
<path d="M3.2 23.3L14 17.3L26 20.8V21.5L13.5 28.6L2.2 22.3Z" fill="url(#m3)"/>
<circle cx="13.6" cy="14.9" r="4.6" fill="#2c2a25"/>
</svg>
<!-- edge -->
<svg style="left:622px;top:1039px" width="32" height="32" viewBox="0 0 32 32">
<defs><linearGradient id="ed1" x1="0" y1="0" x2="1" y2="0.6"><stop offset="0" stop-color="#1fa8f0"/><stop offset="0.5" stop-color="#2ccbe0"/><stop offset="1" stop-color="#62dc4c"/></linearGradient>
<linearGradient id="ed2" x1="0" y1="0" x2="1" y2="1"><stop offset="0" stop-color="#1a8ce6"/><stop offset="1" stop-color="#0f5cb8"/></linearGradient></defs>
<circle cx="16" cy="16" r="15.2" fill="url(#ed1)"/>
<path d="M0.8 17C0.8 10 7 7.5 11.5 8C15.5 8.5 17.5 11.5 16.5 13.5C12 12.5 8.5 15.5 9 20C9.5 25 14 27.5 19.5 27.5C23 27.5 26 25.5 27.5 23.5C25 28.5 20.5 31.2 16 31.2C7.5 31.2 0.8 24.5 0.8 17Z" fill="url(#ed2)"/>
<path d="M9 20C8.5 15.5 12 12.5 16.5 13.5L13 15C11.5 17 12 21 15 23.5C18 26 24 26 27.5 23.5C26 25.5 23 27.5 19.5 27.5C14 27.5 9.5 25 9 20Z" fill="#0b4fa8" opacity="0.6"/>
<circle cx="15.8" cy="15.3" r="4" fill="#2a2823"/>
<path d="M19.2 17.2Q21 19.8 25.5 19.8Q22.5 22.6 18.8 21.6Q16.5 20.8 16.2 19.3Q18.3 18.8 19.2 17.2Z" fill="#56cc58"/>
</svg>
<!-- app eye -->
<svg style="left:685px;top:1039px" width="30" height="30" viewBox="0 0 30 30">
<rect x="0.5" y="6" width="24" height="23" fill="#3f6fb8"/><rect x="2" y="8" width="21" height="19" fill="#89c3e0"/>
<path d="M2 20Q10 15 23 22V27H2Z" fill="#e6d7b0"/>
<ellipse cx="19.5" cy="13" rx="9" ry="12" fill="#e7c49a" stroke="#233b80" stroke-width="2"/>
<ellipse cx="21" cy="14" rx="4.5" ry="6" fill="#3a2412"/>
</svg>
<!-- chrome -->
<div class="a" style="left:732px;top:1030px;width:61px;height:47px;background:#474747"></div>
<div class="a" style="left:732px;top:1077px;width:61px;height:3px;background:#76b9ed"></div>
<svg style="left:746px;top:1039px" width="32" height="32" viewBox="0 0 32 32">
<path d="M16 16L3 8.5A15 15 0 0 1 29 8.5Z" fill="#db4437"/>
<path d="M16 16L29 8.5A15 15 0 0 1 16 31Z" fill="#f4c20d"/>
<path d="M16 16L16 31A15 15 0 0 1 3 8.5Z" fill="#0f9d58"/>
<circle cx="16" cy="16" r="7" fill="#fff"/><circle cx="16" cy="16" r="5.6" fill="#4285f4"/>
</svg>
<div class="a" style="left:759.5px;top:1052px;width:19px;height:19px;border-radius:50%;background:#3c4a54;border:1.5px solid #474747"></div>
<div class="t" style="left:765px;top:1056px;font-size:11px;color:#d0d0d0">v</div>
<!-- blue app -->
<svg style="left:808px;top:1039px" width="32" height="31" viewBox="0 0 32 31">
<path d="M11 0.5L4 5L0.5 13H9A7 7 0 0 1 12 7.5Z" fill="#2e9bf0"/>
<path d="M21 0.5L28 5L31.5 13H23A7 7 0 0 0 20 7.5Z" fill="#2e9bf0"/>
<path d="M5 17H11A6.5 6.5 0 0 0 21 17H27L31 24L26 28L21 26Q16 29 11 26L6 28L1 24Z" fill="#1a5ce8"/>
</svg>
<!-- firefox -->
<svg style="left:870px;top:1039px" width="31" height="31" viewBox="0 0 31 31">
<defs><radialGradient id="ff1" cx="0.7" cy="0.2" r="0.9"><stop offset="0" stop-color="#ffe14a"/><stop offset="0.45" stop-color="#ff9a1f"/><stop offset="0.8" stop-color="#ff3b4a"/><stop offset="1" stop-color="#e3147a"/></radialGradient></defs>
<circle cx="15.5" cy="17" r="13.5" fill="url(#ff1)"/>
<path d="M21 1C27 5 30 11 29 17L22 12Z" fill="#ffcb2e"/>
<circle cx="16.5" cy="15.5" r="6.3" fill="#7b3fe4"/>
<path d="M6 8C9 6 13 6 15 8C11 9 9 11 9 14C7 12 6 10 6 8Z" fill="#ff8a1e"/>
</svg>
<!-- youtube -->
<svg style="left:932px;top:1044px" width="31" height="21" viewBox="0 0 31 21"><rect x="0.5" y="0.3" width="30" height="20.3" rx="5" fill="#ff0000"/><path d="M12.5 6V15L20 10.5Z" fill="#fff"/></svg>
<!-- skype -->
<svg style="left:995px;top:1040px" width="30" height="30" viewBox="0 0 30 30">
<circle cx="15" cy="15" r="13.5" fill="#1aa0e8"/><circle cx="7" cy="7" r="6" fill="#1aa0e8"/><circle cx="23" cy="23" r="6" fill="#1aa0e8"/>
<path d="M19.5 9.5C18.5 8.3 16.8 7.8 15 7.8C12.5 7.8 10.3 9 10.3 11.2C10.3 15.5 19.8 13.7 19.8 18.3C19.8 20.6 17.6 22 15 22C12.8 22 11 21.2 10 19.8" stroke="#fff" stroke-width="3" fill="none"/>
</svg>
<div class="a" style="left:985px;top:1077px;width:51px;height:3px;background:#76b9ed"></div>
<!-- word -->
<svg style="left:1057px;top:1040px" width="29" height="28" viewBox="0 0 29 28">
<defs><linearGradient id="wd" x1="0" y1="0" x2="1" y2="1"><stop offset="0" stop-color="#e6eefa"/><stop offset="0.6" stop-color="#9db7ea"/><stop offset="1" stop-color="#4f78d6"/></linearGradient>
<linearGradient id="ww" x1="0" y1="0" x2="0" y2="1"><stop offset="0" stop-color="#2a8ae0"/><stop offset="1" stop-color="#1a3fb0"/></linearGradient></defs>
<path d="M6.5 0.5H27V27H0.3V6.5Q0.3 0.5 6.5 0.5Z" fill="url(#wd)" stroke="#2c56b8" stroke-width="0.6"/>
<path d="M0.3 19Q9 24 16 18L28 21.5L26 27H0.3Z" fill="#fff"/>
<path d="M3 4H7.2L9.6 14.5L12.4 4H15.6L18.4 14.5L20.8 4H24.5L20.5 19.2H16.6L14 9.8L11.4 19.2H7.5Z" fill="url(#ww)"/>
</svg>
<div class="a" style="left:1047px;top:1077px;width:51px;height:3px;background:#76b9ed"></div>
<!-- tray -->
<svg style="left:1330px;top:1040px" width="30" height="29" viewBox="0 0 30 29">
<defs><linearGradient id="ng" x1="0" y1="1" x2="1" y2="0"><stop offset="0" stop-color="#1f9a2e"/><stop offset="1" stop-color="#7ad61a"/></linearGradient></defs>
<path d="M1.5 19C10 17 17 12 25 4" stroke="url(#ng)" stroke-width="3" fill="none" stroke-linecap="round"/>
<path d="M18 2.5H28.5V13Z" fill="#7ad61a"/>
<rect x="1" y="24.5" width="3.5" height="3.5" rx="1" fill="#24a02c"/>
<rect x="8" y="22" width="3.5" height="6" rx="1" fill="#3aae2a"/>
<rect x="15" y="18" width="3.5" height="10" rx="1" fill="#52be22"/>
<rect x="22" y="11.5" width="3.8" height="16.5" rx="1" fill="#6ccd1c"/>
</svg>
<div class="t" style="left:1370.4px;top:1046.8px;font-size:18.3px;color:#fff">Nifty bank</div>
<div class="t" style="left:1464px;top:1046.8px;font-size:17.2px;color:#3cc23c">+1.23%</div>
<svg style="left:1553px;top:1049px" width="18" height="11" viewBox="0 0 18 11"><path d="M1 10L9 1.5L17 10" stroke="#fff" stroke-width="1.5" fill="none"/></svg>
<svg style="left:1582px;top:1050px" width="21" height="12" viewBox="0 0 21 12"><rect x="0.7" y="0.7" width="17.6" height="10.6" stroke="#fff" stroke-width="1.3" fill="none"/><rect x="2.5" y="2.5" width="6" height="7" fill="#fff"/><rect x="18.6" y="3.8" width="2" height="4.4" fill="#fff"/></svg>
<svg style="left:1613px;top:1047px" width="18" height="17" viewBox="0 0 18 17">
<path d="M1 8A15 15 0 0 1 16 6" stroke="#fff" stroke-width="1.3" fill="none" opacity="0.9"/>
<path d="M3.5 11A11 11 0 0 1 15 9" stroke="#fff" stroke-width="1.3" fill="none"/>
<path d="M6.3 13.7A7 7 0 0 1 14 12" stroke="#fff" stroke-width="1.3" fill="none"/>
<circle cx="14.5" cy="15" r="1.8" fill="#fff"/>
</svg>
<svg style="left:1641px;top:1046px" width="22" height="19" viewBox="0 0 22 19">
<path d="M1 6.5H4.5L9.5 1.5V17.5L4.5 12.5H1Z" stroke="#fff" stroke-width="1.3" fill="none" stroke-linejoin="round"/>
<path d="M13 6.5A4 4 0 0 1 13 12.5M16 4A7.5 7.5 0 0 1 16 15M19 1.5A11 11 0 0 1 19 17.5" stroke="#fff" stroke-width="1.3" fill="none"/>
</svg>
<div class="t" style="left:1675.2px;top:1048.6px;font-size:14.8px;color:#fff;letter-spacing:-0.5px">ENG</div>
<div class="t" style="left:1740.7px;top:1036.4px;font-size:15.2px;color:#fff;letter-spacing:-0.9px">13:37</div>
<div class="t" style="left:1720.4px;top:1059.1px;font-size:15.2px;color:#fff;letter-spacing:-0.2px">18-10-2024</div>
<svg style="left:1818px;top:1044px" width="32" height="32" viewBox="0 0 32 32">
<path d="M1 1H21V17H10.5L7 20.5V17H1Z" fill="#fff"/>
<path d="M4.5 5.5H16M4.5 9.5H16M4.5 13.5H16" stroke="#2b2922" stroke-width="1.1"/>
<circle cx="19.5" cy="20.5" r="9.6" fill="#33322c" stroke="#b8b8b8" stroke-width="1.1"/>
<path d="M19.5 10.9A9.6 9.6 0 0 0 10.4 17.5L19.5 20.5Z" fill="#8a8a86"/>
<path d="M18.3 15.5L20.9 14V26.5H18.6V17.2L16.8 18.2Z" fill="#fff"/>
</svg>
<svg style="left:1865px;top:1041px" width="28" height="28" viewBox="0 0 28 28">
<defs><linearGradient id="cpa" x1="0" y1="0" x2="0" y2="1"><stop offset="0" stop-color="#1b9af2"/><stop offset="0.55" stop-color="#4db66a"/><stop offset="1" stop-color="#f0c419"/></linearGradient>
<linearGradient id="cpb" x1="0" y1="0" x2="0" y2="1"><stop offset="0" stop-color="#b45cf0"/><stop offset="1" stop-color="#f7607e"/></linearGradient></defs>
<path d="M7.5 2H18Q20 2 20.5 4L15 17Q14 18.5 12 18.5H3Q0.5 18.5 1.3 16L5 4.5Q5.8 2 7.5 2Z" fill="url(#cpa)"/>
<path d="M16 2Q19.5 2 21 5L22.5 8H17Z" fill="#1f55db"/>
<path d="M17 8H24Q26.3 8 25.6 10.5L23.3 19H14.2Z" fill="url(#cpb)"/>
<rect x="7" y="19.5" width="19" height="7.2" rx="1.6" fill="#f7c21a"/>
<text x="16.5" y="25.6" font-family="Liberation Sans" font-size="7" font-weight="700" text-anchor="middle" fill="#1a1a1a">PRE</text>
</svg>
<div class="a" style="left:1914px;top:1030px;width:1px;height:50px;background:#7a7a74"></div>
</body></html>
